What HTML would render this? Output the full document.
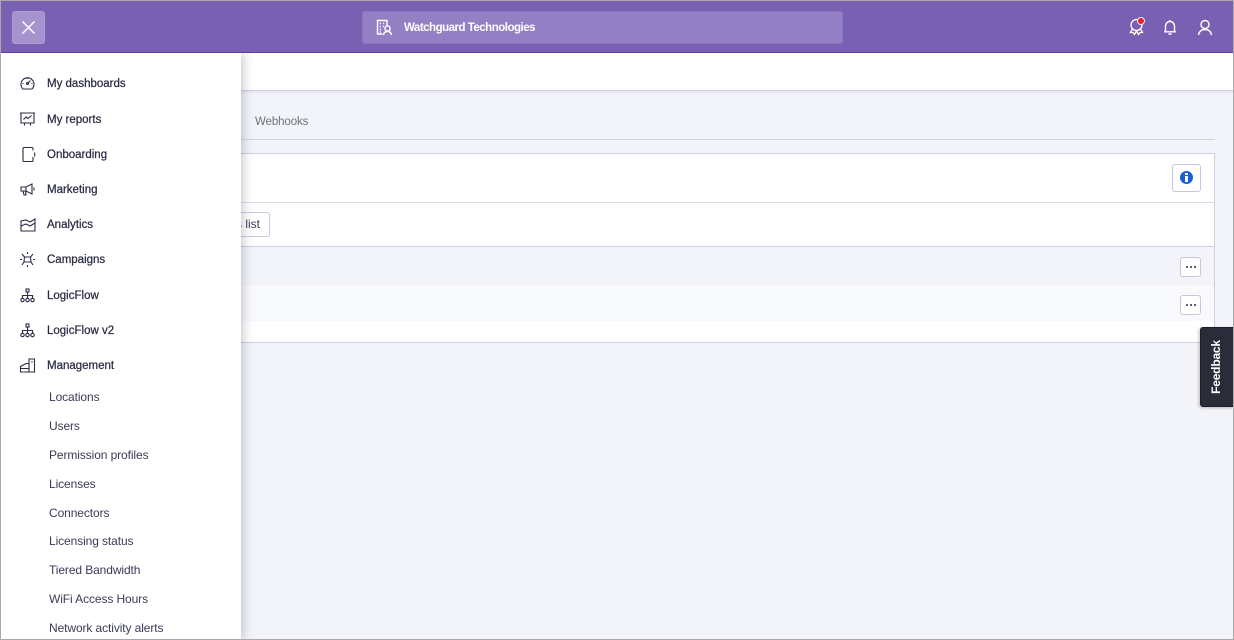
<!DOCTYPE html>
<html><head><meta charset="utf-8"><style>
html,body{margin:0;padding:0}
body{width:1234px;height:640px;overflow:hidden;position:relative;background:#f3f4f9;font-family:"Liberation Sans",sans-serif;color:#2b2c45}
div,span,svg{position:absolute;box-sizing:border-box}
.t{white-space:nowrap;line-height:16px;height:16px}
.m{left:47px;font-size:11.5px;color:#2b2c45;font-weight:400;-webkit-text-stroke:.25px #2b2c45;letter-spacing:0}
.s{left:49px;font-size:12px;color:#3a3b55;letter-spacing:-.1px}
svg.i{left:19px;width:17px;height:17px;fill:none;stroke:#2b2c45;stroke-width:1.1}
svg.h{fill:none;stroke:#fff;stroke-width:1.4}
.dots{left:1180px;width:21px;height:20px;background:#fff;border:1px solid #c9c6dc;border-radius:3px}
.dots b{position:absolute;top:8px;width:2px;height:2px;border-radius:1px;background:#2b2c45}
</style></head><body>
<!-- frame -->
<div style="left:0;top:0;width:1234px;height:640px;border:1px solid #a9a9a9;border-bottom:1px solid #a9a9a9;z-index:50;pointer-events:none"></div>
<!-- header -->
<div style="left:0;top:0;width:1234px;height:53px;background:#7a60b2;border-bottom:1px solid #5c3ea6;z-index:10"></div>
<div style="left:12px;top:11px;width:33px;height:33px;background:#a593cd;border-radius:3px;z-index:11;border:1px solid #ad9dd2"></div>
<svg style="left:21px;top:20px;width:15px;height:15px;z-index:12" viewBox="0 0 15 15"><path d="M1.5 1.5L13.5 13.5M13.5 1.5L1.5 13.5" stroke="#fff" stroke-width="1.5" fill="none"/></svg>
<div style="left:362px;top:11px;width:481px;height:33px;background:#9380c4;border-radius:3px;border:1px solid #8a76bf;z-index:11"></div>
<svg class="h" style="left:376px;top:19px;width:17px;height:17px;z-index:12;stroke-width:1.4" viewBox="0 0 17 17"><path d="M11 7V1.500H1.500V15H6.500M3.800 4.500H5M7 4.500H8.200M3.800 7.500H5M7 7.500H8M3.800 10.500H5M3.800 13H5"/><circle cx="11.500" cy="9.500" r="2.600"/><path d="M7.500 16C7.800 13.500 9.500 12.500 11.500 12.500S15.200 13.500 15.500 16"/></svg>
<div class="t" style="left:404px;top:20px;font-size:11.5px;color:#fff;font-weight:700;z-index:12;letter-spacing:-.5px">Watchguard Technologies</div>
<svg class="h" style="left:1128px;top:17px;width:18px;height:19px;z-index:12;stroke-width:1.3" viewBox="0 0 18 19"><circle cx="8.500" cy="8" r="5.500"/><path d="M4.500 12L2.500 15.500L5 15.500L6.500 17.500L8.500 14L10.500 17.500L12 15.500L14.500 15.500L12.500 12"/></svg>
<div style="left:1137px;top:17px;width:8px;height:8px;border-radius:50%;background:#e0252c;border:1px solid #f2e6ee;z-index:13"></div>
<svg class="h" style="left:1162px;top:19px;width:16px;height:17px;z-index:12;stroke-width:1.4" viewBox="0 0 16 17"><path d="M3.500 12.500V7.500C3.500 4.500 5.500 2.500 8 2.500S12.500 4.500 12.500 7.500V12.500M2 12.800H14M8 1V2.500M6.500 15H9.500"/></svg>
<svg class="h" style="left:1197px;top:19px;width:16px;height:17px;z-index:12;stroke-width:1.4" viewBox="0 0 16 17"><circle cx="8" cy="5.500" r="4"/><path d="M1.500 16C2 12.500 4.500 10.500 8 10.500S14 12.500 14.500 16"/></svg>
<!-- white subheader -->
<div style="left:0;top:53px;width:1234px;height:38px;background:#fff;border-bottom:1px solid #cfcedd;box-shadow:0 1px 3px rgba(120,120,150,.15)"></div>
<!-- tabs -->
<div class="t" style="left:255px;top:114px;font-size:11.5px;color:#6f7080;letter-spacing:-.1px">Webhooks</div>
<div style="left:200px;top:139px;width:1015px;height:1px;background:#d4d4e0"></div>
<!-- card -->
<div style="left:200px;top:153px;width:1015px;height:190px;background:#fff;border:1px solid #d0cee0"></div>
<div style="left:200px;top:202px;width:1014px;height:1px;background:#dcdce4"></div>
<div style="left:200px;top:246px;width:1014px;height:1px;background:#cfcde0"></div>
<div style="left:200px;top:247px;width:1014px;height:39px;background:#f3f4f9"></div>
<div style="left:200px;top:287px;width:1014px;height:34px;background:#f8f9fd"></div>
<!-- info button -->
<div style="left:1172px;top:164px;width:29px;height:28px;background:#fff;border:1px solid #c9c6dc;border-radius:3px"></div>
<div style="left:1180px;top:171px;width:13px;height:13px;border-radius:50%;background:#1a5fd6"></div>
<div style="left:1185px;top:173px;width:3px;height:2px;background:#fff"></div>
<div style="left:1185px;top:176px;width:3px;height:6px;background:#fff"></div>
<!-- list button -->
<div style="left:200px;top:212px;width:70px;height:25px;background:#fff;border:1px solid #c9c6dc;border-radius:3px"></div>
<div class="t" style="left:236px;top:216px;font-size:12px;color:#3a3b55">s list</div>
<!-- dots -->
<div class="dots" style="top:257px"><b style="left:5px"></b><b style="left:9px"></b><b style="left:13px"></b></div>
<div class="dots" style="top:295px"><b style="left:5px"></b><b style="left:9px"></b><b style="left:13px"></b></div>
<!-- feedback -->
<div style="left:1200px;top:327px;width:34px;height:80px;background:#2b2c3a;border:1px solid #1c1c28;border-radius:3px 0 0 3px;box-shadow:-1px 1px 3px rgba(0,0,0,.25)"></div>
<div class="t" style="left:1183px;top:359px;width:66px;text-align:center;font-size:12px;font-weight:700;color:#fff;transform:rotate(-90deg);letter-spacing:-.2px">Feedback</div>
<!-- sidebar -->
<div style="left:0;top:53px;width:241px;height:587px;background:#fff;box-shadow:2px 0 10px rgba(70,70,100,.3);z-index:5"></div>
<div style="left:0;top:0;width:241px;height:640px;z-index:6">
<svg class="i" style="top:74px" viewBox="0 0 17 17"><path d="M4 15A6.500 6.500 0 1 1 13 15ZM8.500 9.500L11.500 6.500M8.500 4V5M3.500 9.500H4.500M12.500 9.500H13.500"/><circle cx="8.500" cy="9.500" r="1"/></svg>
<div class="t m" style="top:76px">My dashboards</div>
<svg class="i" style="top:110px" viewBox="0 0 17 17"><path d="M1 3H16M2 3V13H15V3M4.500 9.500L7 7L9 8.500L12.500 5.500M5.500 13V15.500M11.500 13V15.500"/></svg>
<div class="t m" style="top:112px">My reports</div>
<svg class="i" style="top:146px" viewBox="0 0 17 17"><path d="M14 4.500V2.500Q14 1.500 13 1.500H5Q4 1.500 4 2.500V14.500Q4 15.500 5 15.500H13Q14 15.500 14 14.500V11M15.500 6.500Q16.200 8.500 15.500 10.500"/></svg>
<div class="t m" style="top:147px">Onboarding</div>
<svg class="i" style="top:181px" viewBox="0 0 17 17"><path d="M2 6H7L13 3V13L7 10H2ZM4 10L5 14H7L6.500 10M7 6V10M15 6.500V9.500"/></svg>
<div class="t m" style="top:182px">Marketing</div>
<svg class="i" style="top:216px" viewBox="0 0 17 17"><path d="M2 5V15H16V3L11 6L7 4ZM2 10L7 8L11 10L16 7"/></svg>
<div class="t m" style="top:217px">Analytics</div>
<svg class="i" style="top:251px" viewBox="0 0 17 17"><path d="M5.500 6H11.500L12 11H5Z"/><path d="M8.500 1V3M8.500 14V16M1 8.500H3M14 8.500H16M3 3L5.500 6M14 3L11.500 6M3 14L5 11M14 14L12 11"/></svg>
<div class="t m" style="top:252px">Campaigns</div>
<svg class="i" style="top:287px" viewBox="0 0 17 17"><rect x="7" y="2" width="3" height="3"/><path d="M8.500 5V11M3.500 11V8.500H13.500V11"/><circle cx="3.500" cy="13" r="1.700"/><circle cx="8.500" cy="13" r="1.700"/><circle cx="13.500" cy="13" r="1.700"/></svg>
<div class="t m" style="top:288px">LogicFlow</div>
<svg class="i" style="top:322px" viewBox="0 0 17 17"><rect x="7" y="2" width="3" height="3"/><path d="M8.500 5V11M3.500 11V8.500H13.500V11"/><circle cx="3.500" cy="13" r="1.700"/><circle cx="8.500" cy="13" r="1.700"/><circle cx="13.500" cy="13" r="1.700"/></svg>
<div class="t m" style="top:323px">LogicFlow v2</div>
<svg class="i" style="top:357px" viewBox="0 0 17 17"><path d="M1.500 15V9.500L7 6.500H10V2H15.500V15ZM1.500 11.500H10M10 6.500V15M13 4V5.500"/></svg>
<div class="t m" style="top:358px">Management</div>
<div class="t s" style="top:389px">Locations</div>
<div class="t s" style="top:418px">Users</div>
<div class="t s" style="top:447px">Permission profiles</div>
<div class="t s" style="top:476px">Licenses</div>
<div class="t s" style="top:505px">Connectors</div>
<div class="t s" style="top:533px">Licensing status</div>
<div class="t s" style="top:562px">Tiered Bandwidth</div>
<div class="t s" style="top:591px">WiFi Access Hours</div>
<div class="t s" style="top:620px">Network activity alerts</div>
</div>
</body></html>
